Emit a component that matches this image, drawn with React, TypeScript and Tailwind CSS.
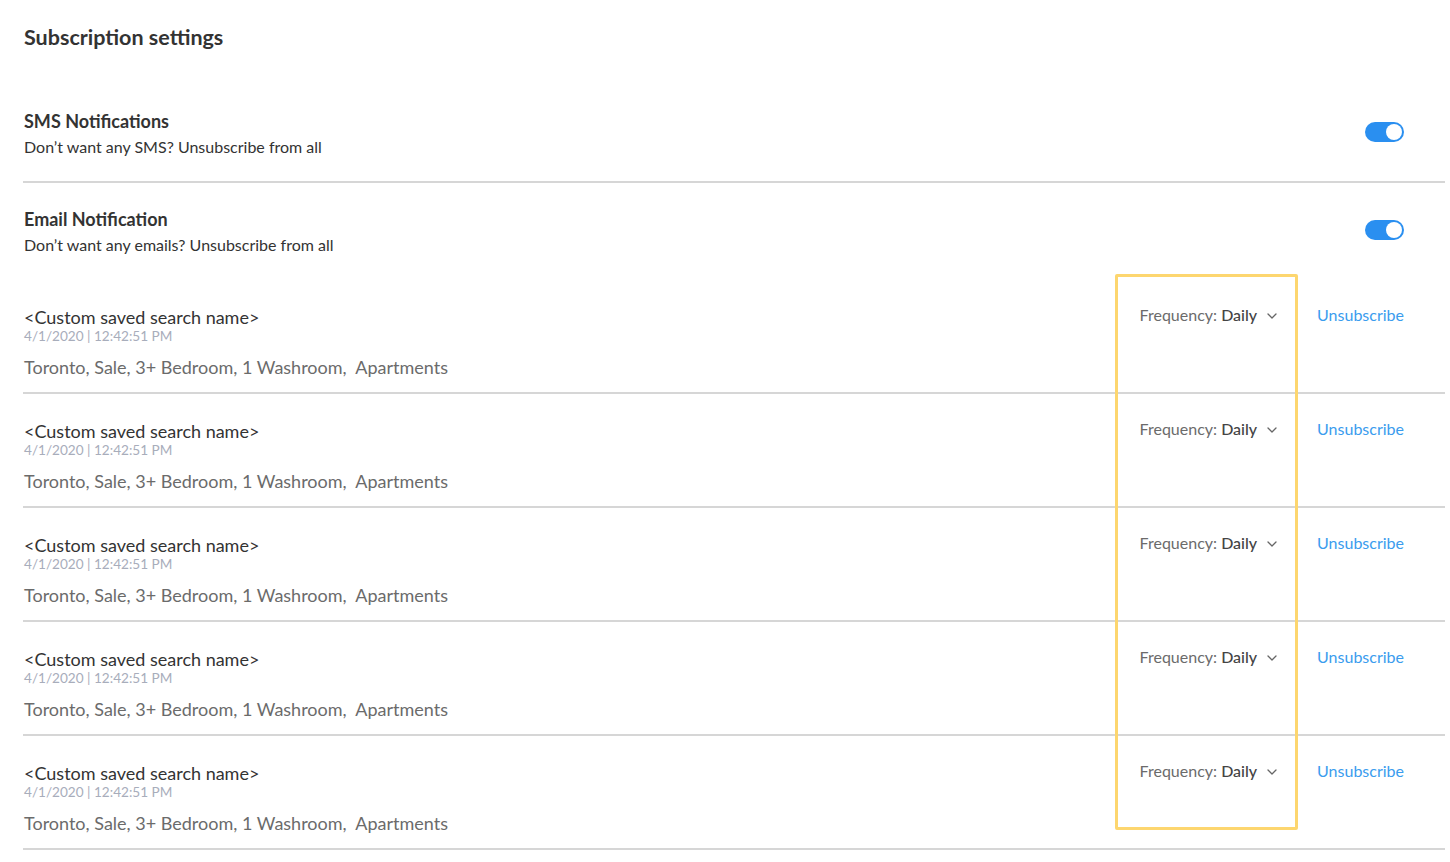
import React from 'react';

interface SavedSearch {
  id: number;
  name: string;
  date: string;
  details: string;
  frequency: string;
}

const searches: SavedSearch[] = [1, 2, 3, 4, 5].map((id) => ({
  id,
  name: '<Custom saved search name>',
  date: '4/1/2020 | 12:42:51 PM',
  details: 'Toronto, Sale, 3+ Bedroom, 1 Washroom,\u00a0 Apartments',
  frequency: 'Daily',
}));

function Toggle() {
  return (
    <div className="flex h-[20px] w-[39px] items-center justify-end rounded-full bg-[#2a8ff0] pr-[2px]">
      <div className="h-[16px] w-[16px] rounded-full bg-white" />
    </div>
  );
}

function Chevron() {
  return (
    <svg width="10" height="6" viewBox="0 0 10 6" fill="none" className="ml-[10px] mt-[2px]">
      <path d="M1 1l4 4 4-4" stroke="#666" strokeWidth="1.3" strokeLinecap="round" strokeLinejoin="round" />
    </svg>
  );
}

function NotificationRow({title, subtitle, bottomPad, border}: {title: string; subtitle: string; bottomPad: string; border: boolean}) {
  return (
    <div className={`flex items-center justify-between pl-[1px] pr-[41px] ${bottomPad} ${border ? 'border-b-2 border-[#d6d6d6]' : ''}`}>
      <div className="flex flex-col">
        <div className="text-[18px] font-bold leading-[24px] text-[#333]">{title}</div>
        <div className="mt-[3px] text-[16px] leading-[22px] text-[#333]">{subtitle}</div>
      </div>
      <div className="-mt-[3px]">
        <Toggle />
      </div>
    </div>
  );
}

export default function App() {
  return (
    <div className="relative min-h-[862px] bg-white font-['Lato',_'Noto_Sans',_sans-serif]">
      <div className="ml-[23px] w-[1422px] pt-[23px]">
        <h1 className="pl-[1px] text-[21.5px] font-bold leading-[28px] text-[#333]">Subscription settings</h1>

        {/* SMS */}
        <div className="pt-[58px]">
          <NotificationRow
            title="SMS Notifications"
            subtitle="Don’t want any SMS? Unsubscribe from all"
            bottomPad="pb-[23px]"
            border
          />
        </div>

        {/* Email */}
        <div className="pt-[24px]">
          <NotificationRow
            title="Email Notification"
            subtitle="Don’t want any emails? Unsubscribe from all"
            bottomPad="pb-[24px]"
            border={false}
          />
        </div>

        {/* Saved searches */}
        {searches.map((s) => (
          <div key={s.id} className="flex items-start justify-between border-b-2 border-[#d6d6d6] pb-[13px] pl-[1px] pr-[41px] pt-[25px]">
            <div className="flex flex-col">
              <div className="text-[18px] leading-[24px] text-[#333]">{s.name}</div>
              <div className="text-[13.6px] leading-[14px] text-[#a8adbb]">{s.date}</div>
              <div className="mt-[12px] text-[18px] leading-[24px] text-[#6b6b6b]">{s.details}</div>
            </div>
            <div className="flex items-center gap-[40px]">
              <div className="flex items-center text-[16px] leading-[20px] text-[#6b6b6b]">
                Frequency:&nbsp;<span className="font-medium text-[#444]">{s.frequency}</span>
                <Chevron />
              </div>
              <a className="text-[16px] leading-[20px] text-[#3a9cee]" href="#">
                Unsubscribe
              </a>
            </div>
          </div>
        ))}
      </div>

      {/* Annotation highlight */}
      <div className="pointer-events-none absolute left-[1115px] top-[274px] h-[556px] w-[183px] rounded-[2px] border-[3px] border-[#fdd66f]" />
    </div>
  );
}
